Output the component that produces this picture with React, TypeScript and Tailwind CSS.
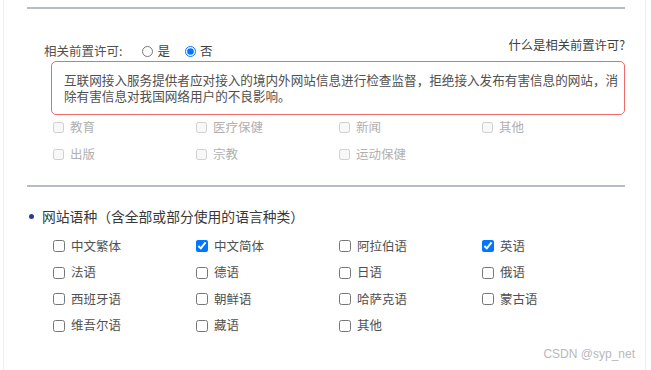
import React from "react";

const industries = ["教育", "医疗保健", "新闻", "其他", "出版", "宗教", "运动保健"];

const languages = [
  { name: "中文繁体", checked: false },
  { name: "中文简体", checked: true },
  { name: "阿拉伯语", checked: false },
  { name: "英语", checked: true },
  { name: "法语", checked: false },
  { name: "德语", checked: false },
  { name: "日语", checked: false },
  { name: "俄语", checked: false },
  { name: "西班牙语", checked: false },
  { name: "朝鲜语", checked: false },
  { name: "哈萨克语", checked: false },
  { name: "蒙古语", checked: false },
  { name: "维吾尔语", checked: false },
  { name: "藏语", checked: false },
  { name: "其他", checked: false },
];

export default function App() {
  return (
    <div
      className="relative w-[651px] h-[370px] bg-white overflow-hidden"
      style={{ fontFamily: '"Noto Sans CJK SC", "Noto Sans", sans-serif' }}
    >
      <div className="ml-[3px] w-[643px] h-full border-x border-[#efefef] pl-[23px]">
        <div className="w-[598px]">
          <div className="pt-[7px]">
            <div className="border-t-2 border-[#b8bcc4]" />
          </div>

          {/* 前置许可 */}
          <div className="mt-[28px] flex justify-between items-start">
            <div className="mt-[6px] ml-[17px] flex items-center text-[12.5px] leading-[16px] text-[#505050]">
              <span>相关前置许可:</span>
              <label className="ml-[20px] flex items-center gap-[4px]">
                <input type="radio" name="permit" className="w-[11px] h-[11px] m-0" />
                <span className="text-[#404040]">是</span>
              </label>
              <label className="ml-[15px] flex items-center gap-[4px]">
                <input type="radio" name="permit" defaultChecked className="w-[11px] h-[11px] m-0" />
                <span className="text-[#404040]">否</span>
              </label>
            </div>
            <span className="text-[12.3px] leading-[16px] text-[#404040]">什么是相关前置许可?</span>
          </div>

          <div className="mt-[2px] ml-[24px] h-[54px] rounded-[5px] border border-[#f06a6a] pl-[12px] pr-[2px] pt-[10px] text-[12.6px] leading-[16px] text-[#505050]">
            互联网接入服务提供者应对接入的境内外网站信息进行检查监督，拒绝接入发布有害信息的网站，消除有害信息对我国网络用户的不良影响。
          </div>

          <div className="mt-[4px] ml-[26px] grid grid-cols-[143px_143px_143px_143px] gap-y-[11px]">
            {industries.map((item) => (
              <label key={item} className="flex items-center gap-[6px] h-[16px] text-[12.5px] text-[#b0b0b0]">
                <input type="checkbox" disabled className="w-[11px] h-[11px] m-0" />
                <span>{item}</span>
              </label>
            ))}
          </div>

          <div className="mt-[23px] border-t-2 border-[#b8bcc4]" />

          {/* 网站语种 */}
          <div className="mt-[19px] flex items-center h-[20px] text-[13.8px] text-[#383838]">
            <span className="ml-[2px] mr-[8px] w-[5px] h-[5px] rounded-full bg-[#2d3a8c]" />
            <span>网站语种（含全部或部分使用的语言种类）</span>
          </div>

          <div className="mt-[7px] ml-[26px] grid grid-cols-[143px_143px_143px_143px] auto-rows-[26.5px]">
            {languages.map((lang) => (
              <label key={lang.name} className="flex items-center gap-[6px] text-[12.5px] text-[#505050]">
                <input
                  type="checkbox"
                  defaultChecked={lang.checked}
                  className="w-[12px] h-[12px] m-0"
                />
                <span>{lang.name}</span>
              </label>
            ))}
          </div>
        </div>
      </div>

      <span
        className="absolute right-[16px] bottom-[9px] text-[12px] leading-[14px] text-[#b8b8b8]"
        style={{ fontFamily: '"Liberation Sans", Arial, sans-serif' }}
      >
        CSDN @syp_net
      </span>
    </div>
  );
}
